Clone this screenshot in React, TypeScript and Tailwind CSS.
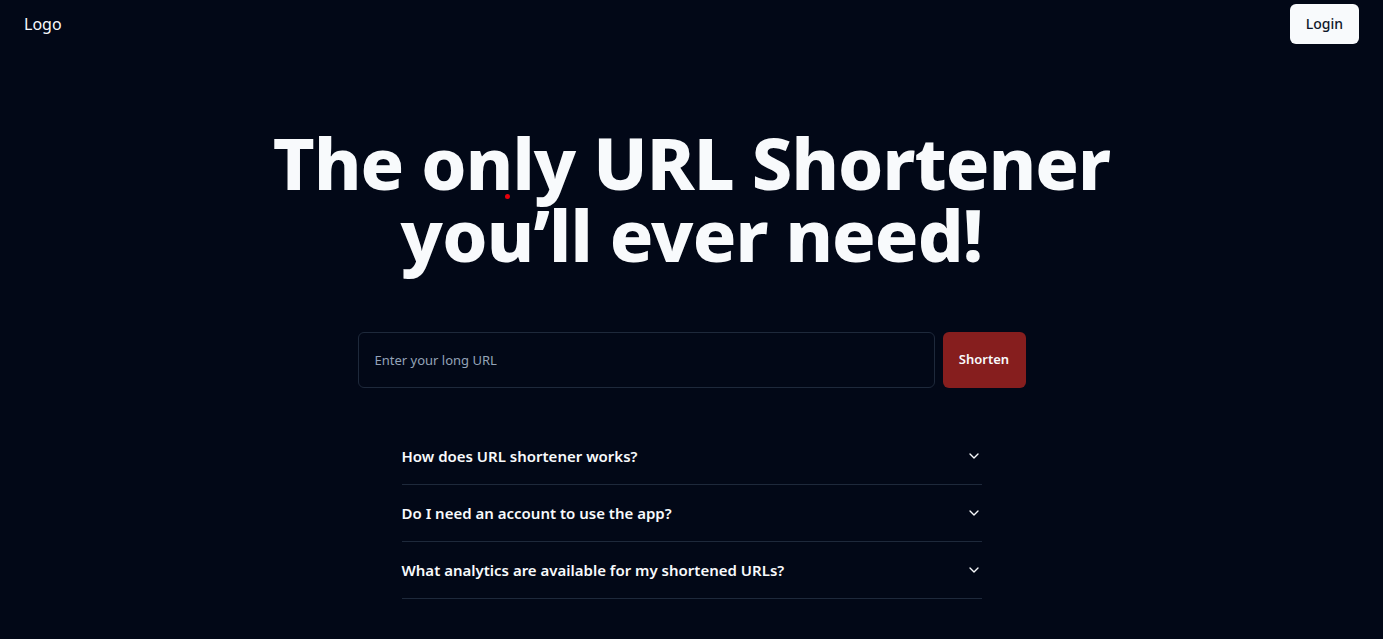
import { ChevronDown } from 'lucide-react'

const faqs = [
    'How does URL shortener works?',
    'Do I need an account to use the app?',
    'What analytics are available for my shortened URLs?',
]

export default function App() {
    return (
        <div className="min-h-screen bg-[#020817] text-[#f8fafc] font-['Noto_Sans',sans-serif]">
            <header className="flex items-center justify-between h-12 px-6">
                <span className="text-base">Logo</span>
                <button className="h-10 px-4 rounded-md bg-[#f8fafc] text-[#0f172a] text-sm font-medium">
                    Login
                </button>
            </header>
            <main className="flex flex-col items-center">
                <div className="relative mt-[78px]">
                    <h1 className="text-center text-7xl leading-[72px] font-extrabold tracking-[-0.012em]">
                        The only URL Shortener
                        <br />
                        you’ll ever need!
                    </h1>
                    {/* stray red dot from the screenshot */}
                    <div className="absolute left-[232px] top-[68px] w-[5px] h-[5px] rounded-full bg-red-600" />
                </div>
                <div className="flex gap-2 mt-[62px]">
                    <input
                        placeholder="Enter your long URL"
                        className="w-[577px] h-14 px-4 rounded-md border border-[#1e293b] bg-transparent text-[13px] placeholder:text-[#94a3b8] outline-none"
                    />
                    <button className="h-14 w-[83px] rounded-md bg-[#861e1e] text-[13px] font-semibold">
                        Shorten
                    </button>
                </div>
                <div className="w-[580px] mt-10">
                    {faqs.map((q) => (
                        <div
                            key={q}
                            className="flex items-center justify-between py-4 border-b border-[#1e293b]"
                        >
                            <span className="text-[15px] leading-6 font-semibold">{q}</span>
                            <ChevronDown className="w-4 h-4" />
                        </div>
                    ))}
                </div>
            </main>
        </div>
    )
}
